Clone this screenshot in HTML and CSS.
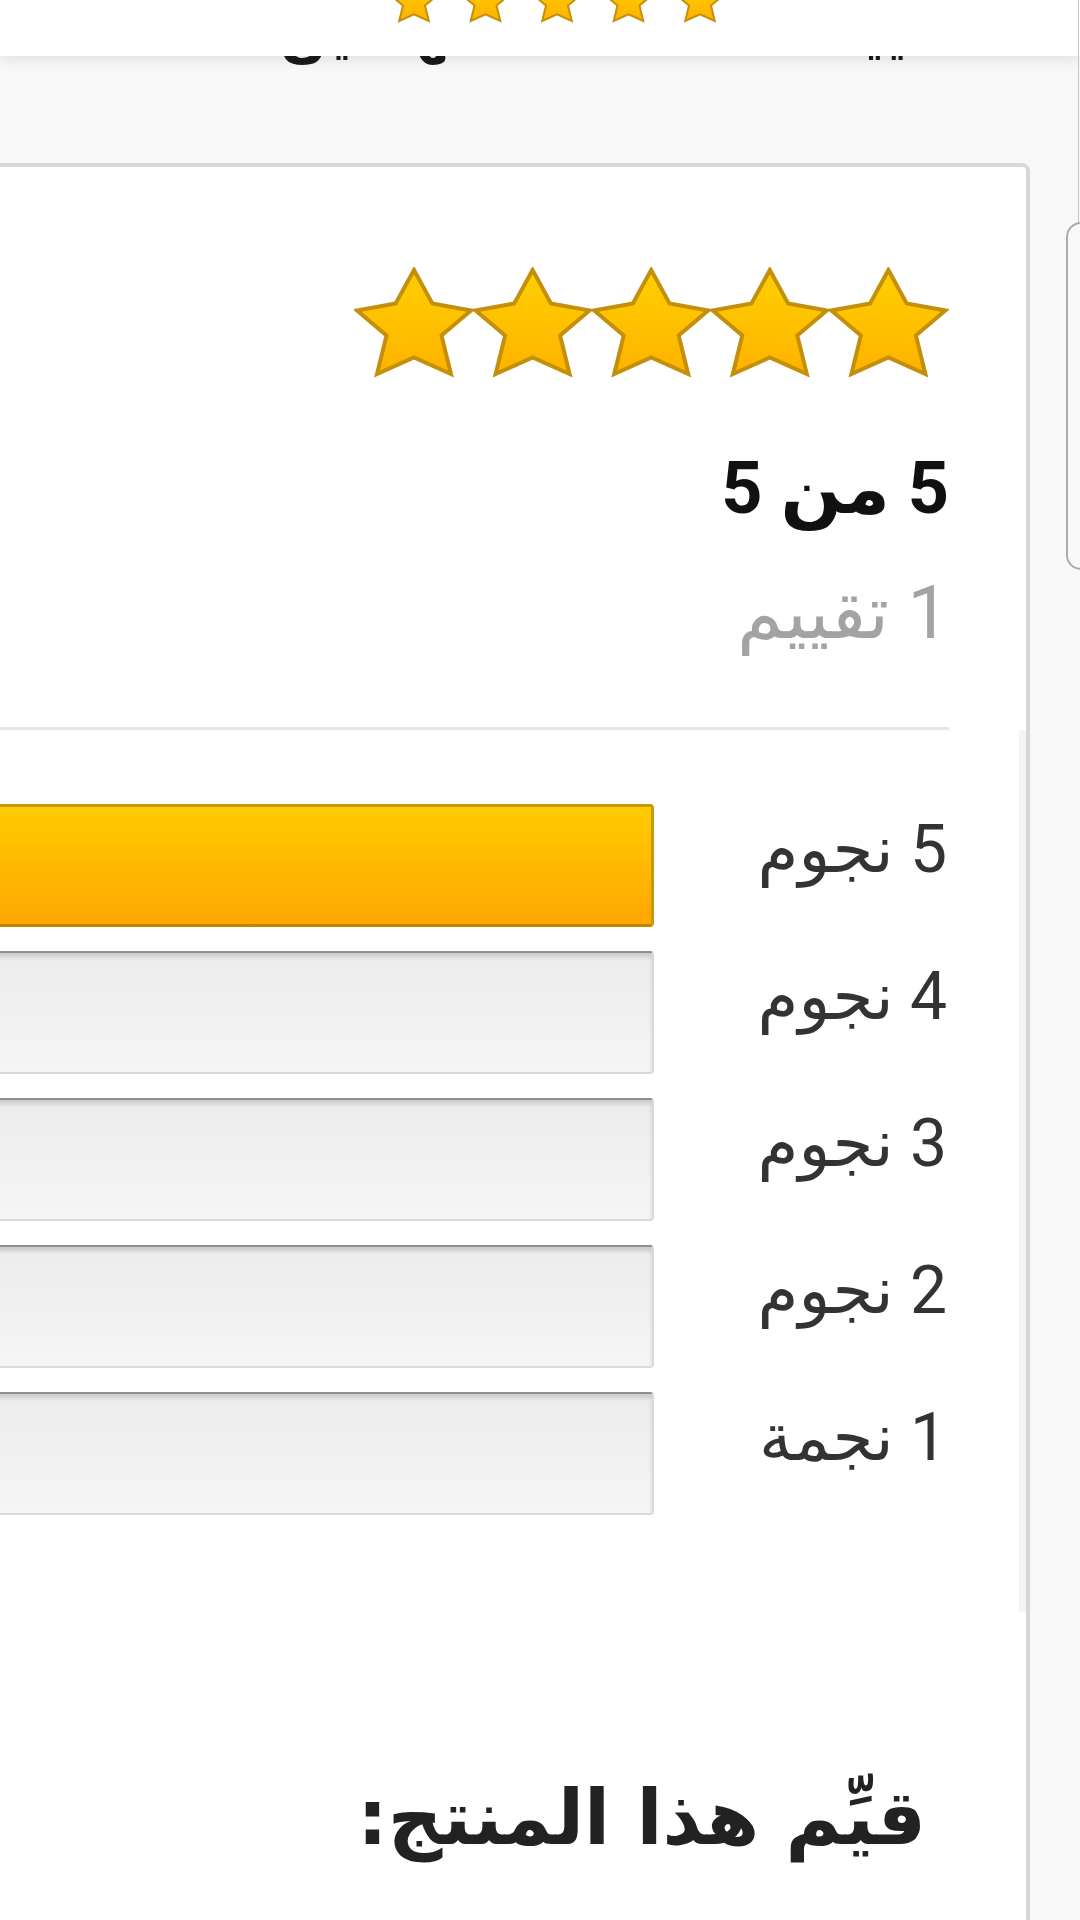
FILE: index.html
```html
<!DOCTYPE html>
<html lang="ar" dir="rtl">
<head>
    <meta charset="UTF-8">
    <meta name="viewport" content="width=device-width, initial-scale=1.0">
    <title>تقييمات المنتج</title>
    <link rel="stylesheet" href="styles.css">
</head>
<body>
    <svg class="defs" width="0" height="0" aria-hidden="true">
        <defs>
            <linearGradient id="starFill" x1="0" y1="0" x2="0" y2="1">
                <stop offset="0" stop-color="#ffd000"/>
                <stop offset="1" stop-color="#ffb200"/>
            </linearGradient>
            <polygon id="starShape" points="0,-59 18.3,-25.5 57,-18.5 27.5,6.5 37,45 0,28.5 -37,45 -27.5,6.5 -57,-18.5 -18.3,-25.5"/>
        </defs>
    </svg>

    <header class="topbar">
        <svg class="stars-small" width="332" height="46" viewBox="0 0 332 46">
            <g fill="url(#starFill)" stroke="#c48f0a" stroke-width="5" stroke-linejoin="miter">
                <use href="#starShape" transform="translate(23,25) scale(0.4)"/>
                <use href="#starShape" transform="translate(94.5,25) scale(0.4)"/>
                <use href="#starShape" transform="translate(166,25) scale(0.4)"/>
                <use href="#starShape" transform="translate(237.5,25) scale(0.4)"/>
                <use href="#starShape" transform="translate(309,25) scale(0.4)"/>
            </g>
        </svg>
    </header>
    <div class="edge-line"></div>
    <div class="edge-handle"></div>

    <nav class="tabs">
        <span>تقييمات</span>
        <span>المهتمين</span>
    </nav>

    <section class="card">
        <div class="summary">
            <svg class="stars-big" width="595" height="115" viewBox="0 0 595 115">
                <g fill="url(#starFill)" stroke="#c48f0a" stroke-width="4" stroke-linejoin="miter">
                    <use href="#starShape" transform="translate(60,62)"/>
                    <use href="#starShape" transform="translate(178.6,62)"/>
                    <use href="#starShape" transform="translate(297.2,62)"/>
                    <use href="#starShape" transform="translate(415.8,62)"/>
                    <use href="#starShape" transform="translate(534.4,62)"/>
                </g>
            </svg>
            <div class="score">5 من 5</div>
            <div class="count">1 تقييم</div>
            <div class="divider"></div>
        </div>

        <div class="dist">
            <div class="row">
                <div class="row-label">5 نجوم</div>
                <div class="bar full"></div>
            </div>
            <div class="row">
                <div class="row-label">4 نجوم</div>
                <div class="bar empty"></div>
            </div>
            <div class="row">
                <div class="row-label">3 نجوم</div>
                <div class="bar empty"></div>
            </div>
            <div class="row">
                <div class="row-label">2 نجوم</div>
                <div class="bar empty"></div>
            </div>
            <div class="row">
                <div class="row-label">1 نجمة</div>
                <div class="bar empty"></div>
            </div>
        </div>

        <h2 class="rate-title">قيِّم هذا المنتج:</h2>
    </section>
</body>
</html>
```

FILE: styles.css
```css
* {
    box-sizing: border-box;
}

body {
    margin: 0;
    width: 1080px;
    height: 1920px;
    overflow: hidden;
    direction: rtl;
    background-color: #f8f8f8;
    color: #111;
    font-family: Roboto, "DejaVu Sans", sans-serif;
}

.defs {
    position: absolute;
    width: 0;
    height: 0;
}

/* sticky top bar over the page */
.topbar {
    position: fixed;
    top: 0;
    left: 0;
    right: 0;
    height: 56px;
    background-color: #fff;
    box-shadow: 0 2px 14px rgba(0, 0, 0, 0.12);
    display: flex;
    justify-content: center;
    padding-left: 34px;
    overflow: hidden;
    z-index: 5;
}

.stars-small {
    margin-top: -22px;
    flex: none;
}

.edge-line {
    position: fixed;
    top: 0;
    right: 1px;
    width: 1px;
    height: 222px;
    background-color: #c8c8c8;
    z-index: 6;
}

.edge-handle {
    position: fixed;
    top: 222px;
    right: -16px;
    width: 30px;
    height: 348px;
    border: 2px solid #ababab;
    border-radius: 16px;
    background-color: #f8f8f8;
    z-index: 6;
}

.tabs {
    height: 163px;
    display: flex;
    justify-content: space-between;
    padding: 4px 110px 0 280px;
    font-family: "DejaVu Sans", sans-serif;
    font-weight: bold;
    font-size: 56px;
    line-height: 1;
    color: #1a1a1a;
}

.card {
    margin: 0 50px 0 -40px;
    height: 1757px;
    background-color: #fff;
    border-top: 4px solid #d9d9d9;
    border-right: 4px solid #d6d6d6;
    border-top-right-radius: 8px;
}

.summary {
    padding: 100px 77px 0 0;
}

.stars-big {
    display: block;
}

.score {
    margin-top: 64px;
    font-weight: bold;
    font-size: 72px;
    line-height: 86px;
    color: #111;
}

.count {
    margin-top: 36px;
    font-size: 74px;
    line-height: 89px;
    color: #a3a3a3;
}

.divider {
    margin-top: 70px;
    height: 3px;
    background-color: #e6e6e6;
}

.dist {
    display: flex;
    flex-direction: column;
    gap: 24px;
    padding: 74px 70px 97px 0;
    border-right: 7px solid #f4f4f4;
}

.row {
    display: flex;
    align-items: flex-start;
    height: 123px;
}

.row-label {
    flex: none;
    width: 295px;
    padding: 13px 2px 0 0;
    font-size: 66px;
    line-height: 66px;
    color: #333;
}

.bar {
    flex: 1;
    height: 123px;
    border-radius: 4px;
}

.bar.full {
    background: linear-gradient(#ffcc00, #ffa600);
    border: 3px solid #c9980a;
    border-bottom-color: #bf8600;
}

.bar.empty {
    background: linear-gradient(#ececec, #f5f5f5);
    border: 2px solid #d9d9d9;
    border-top-color: #8f8f8f;
    box-shadow: inset 0 4px 4px rgba(0, 0, 0, 0.14);
}

.rate-title {
    margin: 0;
    padding: 160px 100px 0 0;
    font-family: "DejaVu Sans", sans-serif;
    font-weight: bold;
    font-size: 76px;
    line-height: 1.2;
    color: #222;
}
```
